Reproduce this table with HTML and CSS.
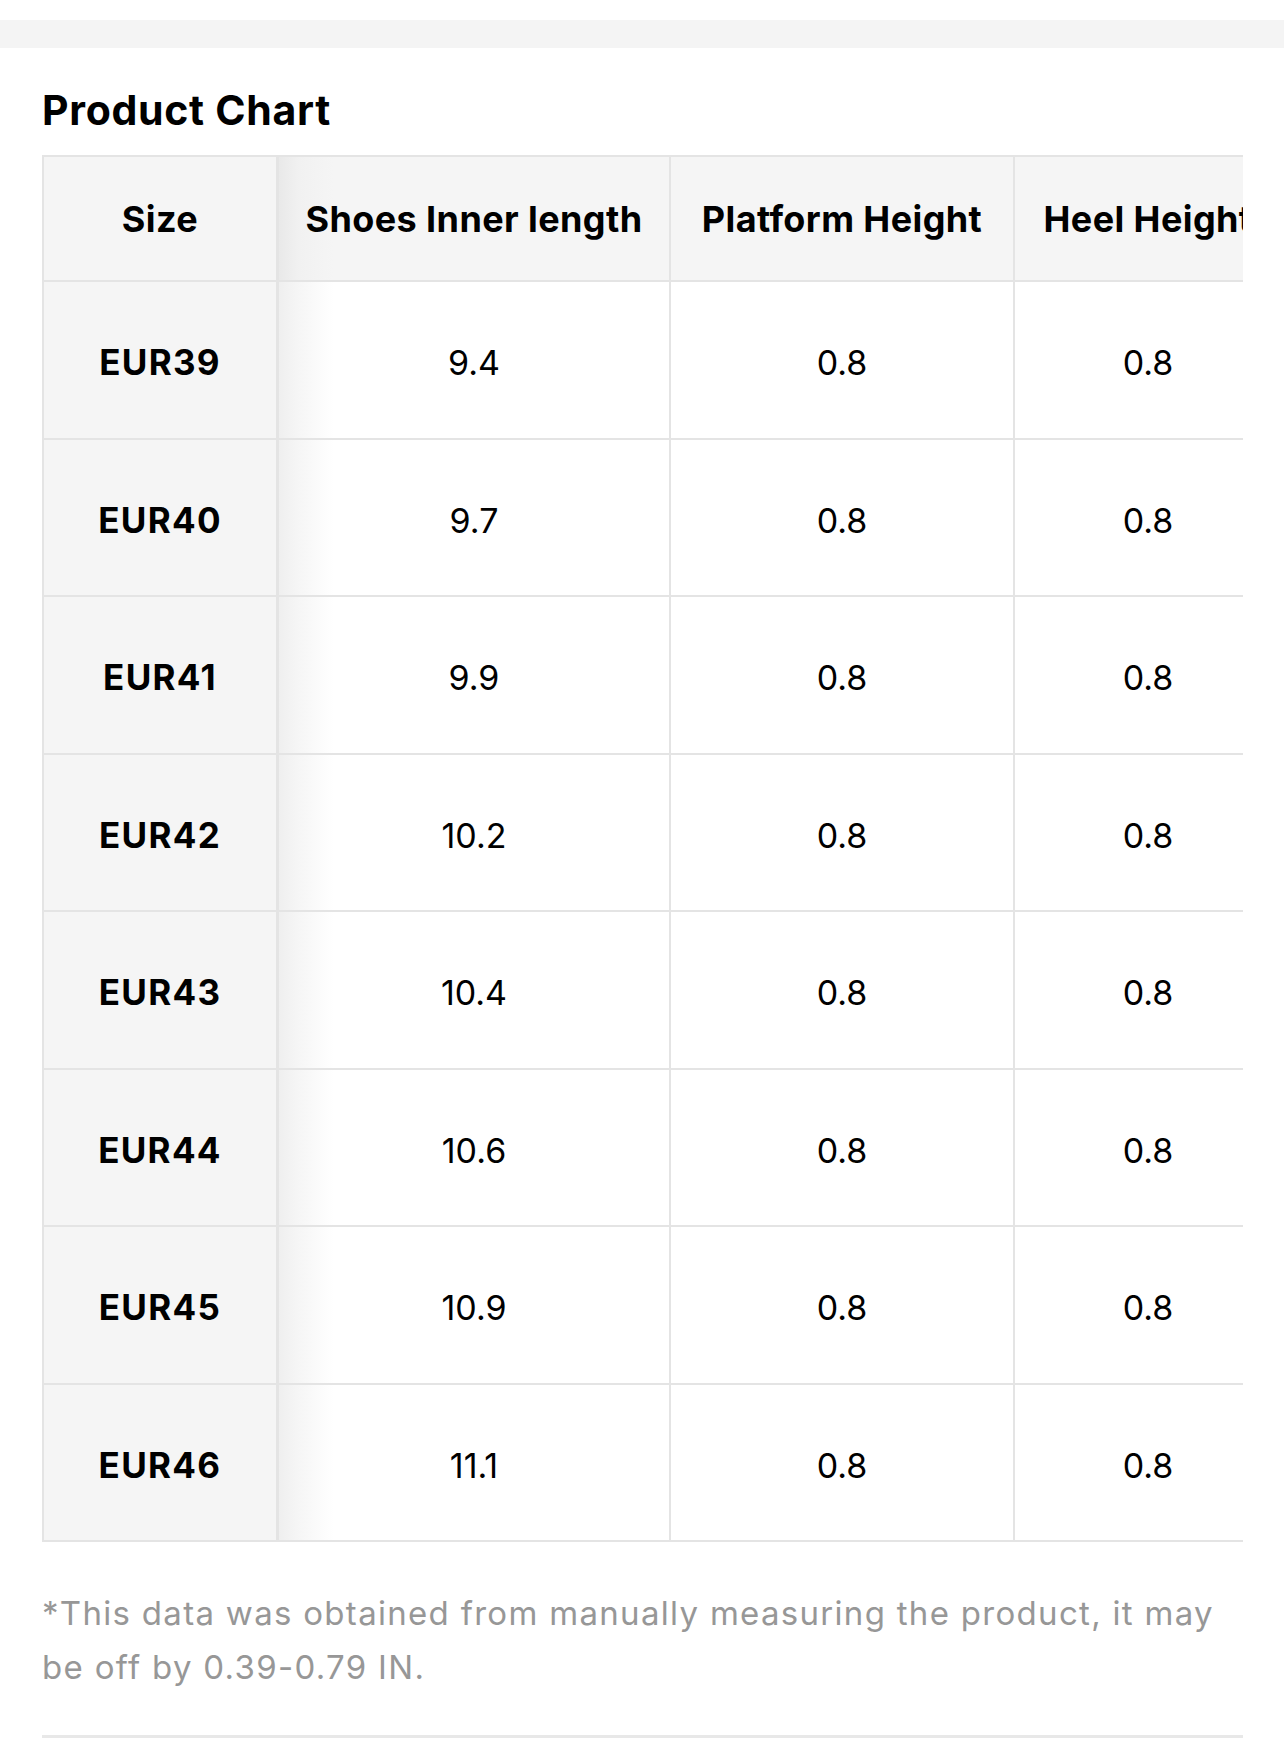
FILE: index.html
```html
<!DOCTYPE html>
<html lang="en">
<head>
<meta charset="utf-8">
<title>Product Chart</title>
<link rel="stylesheet" href="styles.css">
</head>
<body>
<div class="band"></div>
<section class="chart">
  <h2 class="title">Product Chart</h2>
  <div class="table-wrap">
    <table class="size-table">
      <thead>
        <tr>
          <th class="c1">Size</th>
          <th class="c2">Shoes Inner length</th>
          <th class="c3">Platform Height</th>
          <th class="c4">Heel Height</th>
        </tr>
      </thead>
      <tbody>
        <tr><th class="c1">EUR39</th><td class="c2">9.4</td><td>0.8</td><td>0.8</td></tr>
        <tr><th class="c1">EUR40</th><td class="c2">9.7</td><td>0.8</td><td>0.8</td></tr>
        <tr><th class="c1">EUR41</th><td class="c2">9.9</td><td>0.8</td><td>0.8</td></tr>
        <tr><th class="c1">EUR42</th><td class="c2">10.2</td><td>0.8</td><td>0.8</td></tr>
        <tr><th class="c1">EUR43</th><td class="c2">10.4</td><td>0.8</td><td>0.8</td></tr>
        <tr><th class="c1">EUR44</th><td class="c2">10.6</td><td>0.8</td><td>0.8</td></tr>
        <tr><th class="c1">EUR45</th><td class="c2">10.9</td><td>0.8</td><td>0.8</td></tr>
        <tr><th class="c1">EUR46</th><td class="c2">11.1</td><td>0.8</td><td>0.8</td></tr>
      </tbody>
    </table>
  </div>
  <p class="note">*This data was obtained from manually measuring the product, it may be off by 0.39-0.79 IN.</p>
  <div class="divider"></div>
</section>
</body>
</html>
```

FILE: styles.css
```css
html, body {
  margin: 0;
  padding: 0;
  background: #ffffff;
}
body {
  font-family: Inter, "Liberation Sans", Arial, sans-serif;
  color: #000;
}
.band {
  margin-top: 20px;
  height: 28px;
  background: #f4f4f4;
}
.chart {
  padding: 37px 41px 0 42px;
}
.title {
  margin: 0;
  font-size: 41px;
  line-height: 50px;
  font-weight: 700;
  letter-spacing: 0.7px;
}
.table-wrap {
  margin-top: 20px;
  overflow: hidden;
}
.size-table {
  border-collapse: separate;
  border-spacing: 0;
  table-layout: fixed;
  width: 1241px;
  border-top: 2px solid #e4e4e4;
  border-left: 2px solid #e4e4e4;
}
.size-table th,
.size-table td {
  box-sizing: border-box;
  border-right: 2px solid #e4e4e4;
  border-bottom: 2px solid #e4e4e4;
  text-align: center;
  padding: 59px 0 53px;
  line-height: 43.5px;
  font-size: 34px;
  white-space: nowrap;
}
.size-table thead th {
  background: #f5f5f5;
  font-weight: 700;
  font-size: 36px;
  letter-spacing: 0.4px;
  padding: 41px 0 39px;
  line-height: 43px;
}
.size-table th.c1 { width: 235px; }
.size-table thead .c2 { width: 392px; }
.size-table thead .c3 { width: 344px; }
.size-table thead .c4 { width: 268px; }
.size-table tbody th {
  background: #f5f5f5;
  font-weight: 700;
  font-size: 35px;
  letter-spacing: 1.3px;
}
.size-table td {
  font-weight: 400;
  background: #ffffff;
}
.size-table .c1 {
  border-right-width: 3px;
}
.size-table td.c2 {
  background: linear-gradient(to right, #efefef 0px, #f6f6f6 20px, #ffffff 55px);
}
.size-table thead th.c2 {
  background: linear-gradient(to right, #e9e9e9 0px, #f1f1f1 20px, #f5f5f5 55px);
}
.note {
  margin: 44px 0 0;
  font-size: 33px;
  line-height: 54px;
  letter-spacing: 1.3px;
  color: #979797;
}
.divider {
  margin-top: 41px;
  height: 3px;
  background: #e8e8e8;
}
```
